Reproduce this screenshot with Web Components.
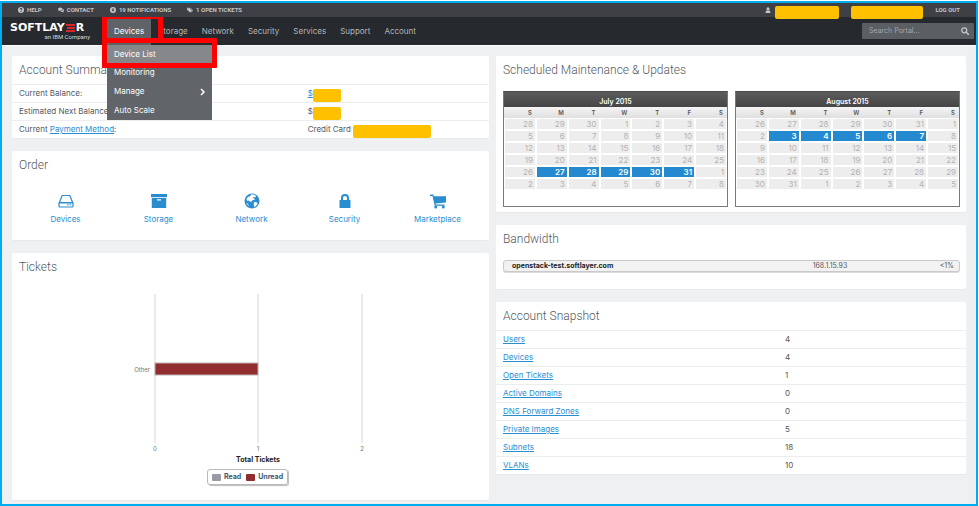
<!DOCTYPE html>
<html lang="en">
<head>
<meta charset="utf-8">
<title>SoftLayer Portal</title>
<style>
    body{
        margin: 0;
        background: #fff;
        color: #55585c;
        font: 8px/17px Inter, "Liberation Sans", sans-serif;
        --link: #2a8dd0;
        --line: #eceded;
        --pill: #ffc000;
        --mark: #fe0000;
        --title-font: 300 12px/28px Roboto, "Liberation Sans", sans-serif;
    }
</style>
</head>
<body>
<portal-app></portal-app>

<script>
class BaseElement extends HTMLElement{
    constructor(){
        super();
        this.attachShadow({mode: "open"});
    }
    connectedCallback(){
        const template = document.createElement("template");
        template.innerHTML = this.getStyle() + this.getTemplate();
        this.shadowRoot.replaceChildren(template.content.cloneNode(true));
    }
}

const icons = {
    help: `<path fill-rule="evenodd" d="M8 0a8 8 0 1 0 0 16A8 8 0 0 0 8 0zM5 6c0-2 1.300-3.300 3.200-3.300S11.300 4 11.300 5.700c0 2-2 2.200-2 3.600H6.900c0-2.400 1.900-2.500 1.900-3.500 0-1.200-1.500-1-1.500.4zM6.900 10.800h2.400V13H6.900z"/>`,
    chat: `<path d="M6 1c3.400 0 6 2 6 4.500S9.400 10 6 10c-.7 0-1.300 0-2-.3L1 11l1-2.500C.7 7.700 0 6.700 0 5.500 0 3 2.600 1 6 1z"/><path d="M13 5c2 .7 3 2 3 3.700 0 1.300-.7 2.300-1.700 3l.9 3-3.400-1.500c-2.500.4-4.800-.4-5.800-1.800 4 .2 7-2.600 7-6.400z"/>`,
    notice: `<path fill-rule="evenodd" d="M8 0a8 8 0 1 0 0 16A8 8 0 0 0 8 0zM6.500 3h3v4.500H12L8 12.500 4 7.500h2.500z"/>`,
    tags: `<path fill-rule="evenodd" d="M0 2h6l7 7-5 5.500L0 7.500zM2 4v2h2V4z"/><path d="M8 2h1.500L16 9l-5 5.500-1-1L14 9z"/>`,
    user: `<circle cx="8" cy="4.500" r="4"/><path d="M1.500 16c0-5 2-7.500 4-7.500 1.500 1 3.500 1 5 0 2 0 4 2.500 4 7.500z"/>`,
    search: `<circle cx="6.500" cy="6.500" r="5" fill="none" stroke="currentColor" stroke-width="2.500"/><path d="M10 10l5 5" stroke="currentColor" stroke-width="3" stroke-linecap="round"/>`,
    devices: `<path d="M4.200 2.500h7.600L14.800 10H1.200z" fill="none" stroke="currentColor" stroke-width="1.200" stroke-linejoin="round"/><rect x="1" y="9.500" width="14" height="4.500" rx="1" fill="none" stroke="currentColor" stroke-width="1.200"/><path d="M9 11.300h1.500v1H9zM11.500 11.300H13v1h-1.500z"/>`,
    storage: `<path d="M0 1h16v3.200H0z"/><path fill-rule="evenodd" d="M.8 5h14.400v10H.8zM6 6.300v1.300h4V6.300z"/>`,
    network: `<circle cx="8" cy="8" r="7.500"/><path fill="#fff" d="M7.500 1.200l2.800.5 1.800 1.400-1 1.500-1.400-.6-1 1.200 1.800.3.300 1.300-2 .3-1.300 1.600-1.600-.2-1.300-1-1.300.6L2.500 6 4 3.800l1.700-.3zM10 9l2.500.3 1.300 1-1.700 2.700-1.800 1-.6-2.500zM2 10l2 .8 1 2.400z"/>`,
    security: `<path fill-rule="evenodd" d="M4 7V5a4 4 0 0 1 8 0v2h1.500v8h-11V7zM6 7h4V5a2 2 0 0 0-4 0z"/>`,
    cart: `<path d="M0 1.500h3.300l.6 1.700H16v6.300l-10.500 1 .3 1H14.500v1.300H4.700L2.500 2.900H0z"/><circle cx="5.700" cy="14" r="1.500"/><circle cx="13.300" cy="14" r="1.500"/>`
};

class PortalIcon extends BaseElement{
    getTemplate(){
        return `<svg viewBox="0 0 16 16" aria-hidden="true" fill="currentColor">${icons[this.getAttribute("name")]}</svg>`;
    }
    getStyle(){
        return `
        <style>
            :host{
                display: block;
                width: var(--icon-size, 6px);
                height: var(--icon-size, 6px);
            }
            svg{
                display: block;
                width: 100%;
                height: 100%;
            }
        </style>`;
    }
}
customElements.define("portal-icon", PortalIcon);

// covers a private value
class PrivateValue extends BaseElement{
    getTemplate(){ return ``; }
    getStyle(){
        return `
        <style>
            :host{
                display: block;
                flex: none;
                width: var(--width, 28px);
                height: 13px;
                border-radius: 2px;
                background: var(--pill);
            }
        </style>`;
    }
}
customElements.define("private-value", PrivateValue);

class TopBar extends BaseElement{
    getTemplate(){
        return `
        <a href="#"><portal-icon name="help"></portal-icon>HELP</a>
        <a href="#"><portal-icon name="chat"></portal-icon>CONTACT</a>
        <a href="#"><portal-icon name="notice"></portal-icon>19 NOTIFICATIONS</a>
        <a href="#"><portal-icon name="tags"></portal-icon>1 OPEN TICKETS</a>
        <div class="user">
            <portal-icon name="user"></portal-icon>
            <private-value style="--width: 64px"></private-value>
            <private-value style="--width: 72px"></private-value>
            <a href="#">LOG OUT</a>
        </div>`;
    }
    getStyle(){
        return `
        <style>
            :host{
                display: flex;
                gap: 16px;
                height: 14px;
                padding: 0 16px;
                position: relative;
                z-index: 1;
                background: #3e4046;
                color: #c3c5c8;
                font: 700 6px/14px Roboto, "Liberation Sans", sans-serif;
            }
            a{
                display: flex;
                align-items: center;
                gap: 3px;
                color: inherit;
                text-decoration: none;
            }
            .user{
                display: flex;
                align-items: flex-start;
                gap: 12px;
                margin-left: auto;
            }
            .user portal-icon{
                margin: 4px -8px 0 0;
            }
            private-value{
                margin-top: 3px;
            }
        </style>`;
    }
}
customElements.define("top-bar", TopBar);

class BrandLogo extends BaseElement{
    getTemplate(){
        return `
        <div class="name">SOFTLAY<svg width="9" height="8" viewBox="0 0 9 8" role="img" aria-label="E"><path fill="#d9252c" d="M0 0h9v2H0zM1 3h8v2H1zM0 6h9v2H0z"/></svg>R</div>
        <div class="sub">an IBM Company</div>`;
    }
    getStyle(){
        return `
        <style>
            :host{
                display: block;
                width: 80px;
                color: #fff;
            }
            .name{
                display: flex;
                align-items: center;
                gap: 1px;
                font: 700 11px/10px "DejaVu Sans", sans-serif;
            }
            .sub{
                text-align: right;
                font: 6px/7px Roboto, sans-serif;
                color: #d8d9da;
            }
        </style>`;
    }
}
customElements.define("brand-logo", BrandLogo);

class NavMenu extends BaseElement{
    getTemplate(){
        return `
        <a class="open" href="#">Devices</a>
        <div class="menu">
            <a class="current" href="#">Device List</a>
            <a href="#">Monitoring</a>
            <a href="#">Manage <svg width="6" height="8" viewBox="0 0 6 8"><path d="M1 1l3 3-3 3" fill="none" stroke="#fff" stroke-width="1.500"/></svg></a>
            <a href="#">Auto Scale</a>
        </div>
        <i class="mark tab"></i>
        <i class="mark item"></i>`;
    }
    getStyle(){
        return `
        <style>
            :host{
                display: block;
                position: relative;
            }
            a{
                color: #fff;
                text-decoration: none;
            }
            .open{
                display: block;
                padding: 0 7px;
                line-height: 28px;
                background: #5f6266;
            }
            .menu{
                position: absolute;
                top: 28px;
                left: 0;
                width: 105px;
                background: #616468;
            }
            .menu a{
                display: flex;
                align-items: center;
                justify-content: space-between;
                padding: 0 6px 0 7px;
                line-height: 19px;
            }
            .menu .current{
                background: #85878b;
                line-height: 18px;
            }
            .mark{
                position: absolute;
                box-sizing: border-box;
                border: 5px solid var(--mark);
                border-radius: 1px;
            }
            .tab{
                left: -5px;
                top: -3px;
                width: 61px;
                height: 29px;
            }
            .item{
                left: -5px;
                top: 21px;
                width: 115px;
                height: 30px;
            }
        </style>`;
    }
}
customElements.define("nav-menu", NavMenu);

class NavBar extends BaseElement{
    getTemplate(){
        const links = ["Storage", "Network", "Security", "Services", "Support", "Account"];
        return `
        <brand-logo></brand-logo>
        <nav>
            <nav-menu></nav-menu>
            ${links.map(l => `<a href="#">${l}</a>`).join("")}
        </nav>
        <form>
            <input type="search" placeholder="Search Portal..." aria-label="Search Portal">
            <button type="button" aria-label="Search"><portal-icon name="search"></portal-icon></button>
        </form>`;
    }
    getStyle(){
        return `
        <style>
            :host{
                display: flex;
                align-items: center;
                height: 28px;
                padding: 0 2px 0 8px;
                background: #26292d;
                border-bottom: 1px solid #fff;
                color: #b4b6b9;
            }
            nav{
                display: flex;
                flex: 1;
                margin-left: 17px;
                line-height: 28px;
            }
            nav > a{
                padding: 0 7px;
                color: inherit;
                text-decoration: none;
            }
            form{
                display: flex;
                align-items: center;
                width: 112px;
                height: 16px;
                background: #5b5e63;
                border-radius: 1px;
            }
            input{
                flex: 1;
                min-width: 0;
                padding: 0 0 0 7px;
                border: 0;
                background: none;
                color: #fff;
                font: 7px/16px Inter, sans-serif;
            }
            input::placeholder{
                color: #a3a5a9;
            }
            button{
                --icon-size: 8px;
                padding: 0 5px;
                border: 0;
                background: none;
                color: #c3c5c8;
            }
        </style>`;
    }
}
customElements.define("nav-bar", NavBar);

class PortalCard extends BaseElement{
    getTemplate(){
        return `<h2>${this.getAttribute("heading")}</h2><slot></slot>`;
    }
    getStyle(){
        return `
        <style>
            :host{
                display: block;
                background: #fff;
                border-bottom: 1px solid #e8e9eb;
                border-radius: 2px;
            }
            h2{
                margin: 0;
                padding: 0 7px;
                font: var(--title-font);
                color: #55585c;
            }
        </style>`;
    }
}
customElements.define("portal-card", PortalCard);

const dataStyle = `
    :host{
        display: block;
    }
    table{
        width: 100%;
        border-collapse: collapse;
        table-layout: fixed;
    }
    th, td{
        height: 17px;
        padding: 0 7px;
        border-top: 1px solid var(--line);
        text-align: left;
        font-weight: 400;
    }
    a{
        color: var(--link);
    }`;

class AccountSummary extends BaseElement{
    getTemplate(){
        return `
        <table>
            <tr><th>Current Balance:</th><td><div><a href="#">$</a><private-value></private-value></div></td></tr>
            <tr><th>Estimated Next Balance:</th><td><div>$<private-value></private-value></div></td></tr>
            <tr><th>Current <a href="#">Payment Method</a>:</th><td><div>Credit Card&nbsp;<private-value style="--width: 78px"></private-value></div></td></tr>
        </table>`;
    }
    getStyle(){
        return `
        <style>
            ${dataStyle}
            th{
                width: 58%;
            }
            td{
                padding-left: 5px;
            }
            td div{
                display: flex;
                align-items: flex-end;
                height: 17px;
            }
        </style>`;
    }
}
customElements.define("account-summary", AccountSummary);

class AccountSnapshot extends BaseElement{
    getTemplate(){
        const rows = [
            ["Users", 4], ["Devices", 4], ["Open Tickets", 1], ["Active Domains", 0],
            ["DNS Forward Zones", 0], ["Private Images", 5], ["Subnets", 18], ["VLANs", 10]
        ];
        return `<table>${rows.map(([name, count]) => `<tr><th><a href="#">${name}</a></th><td>${count}</td></tr>`).join("")}</table>`;
    }
    getStyle(){
        return `
        <style>
            ${dataStyle}
            th{
                width: 57%;
            }
        </style>`;
    }
}
customElements.define("account-snapshot", AccountSnapshot);

class OrderLinks extends BaseElement{
    getTemplate(){
        const items = [
            ["devices", "Devices"], ["storage", "Storage"], ["network", "Network"],
            ["security", "Security"], ["cart", "Marketplace"]
        ];
        return items.map(([icon, label]) => `<a href="#"><portal-icon name="${icon}"></portal-icon>${label}</a>`).join("");
    }
    getStyle(){
        return `
        <style>
            :host{
                display: grid;
                grid-template-columns: repeat(5, 1fr);
                padding: 14px 5px 12px 7px;
                --icon-size: 16px;
            }
            a{
                display: flex;
                flex-direction: column;
                align-items: center;
                gap: 2px;
                color: var(--link);
                text-decoration: none;
            }
        </style>`;
    }
}
customElements.define("order-links", OrderLinks);

class MonthCalendar extends BaseElement{
    getTemplate(){
        const start = Number(this.getAttribute("start"));
        const before = Number(this.getAttribute("before"));
        const length = 31;
        const from = Number(this.getAttribute("from"));
        const to = Number(this.getAttribute("to"));
        let rows = "";
        for(let w = 0; w < 6; w++){
            rows += "<tr>";
            for(let d = 0; d < 7; d++){
                // day 1 is the first of the shown month
                const day = start - before + w * 7 + d;
                const shown = day < 1 ? day + before : day > length ? day - length : day;
                rows += `<td${day >= from && day <= to ? ' class="event"' : ""}>${shown}</td>`;
            }
            rows += "</tr>";
        }
        return `
        <table>
            <caption>${this.getAttribute("month")}</caption>
            <thead><tr>${[..."SMTWTFS"].map(d => `<th>${d}</th>`).join("")}</tr></thead>
            <tbody>${rows}</tbody>
        </table>`;
    }
    getStyle(){
        return `
        <style>
            :host{
                display: block;
                flex: 1;
                padding-bottom: 16px;
                border: 1px solid #77797b;
                border-top-color: #4a4a4a;
            }
            table{
                width: 100%;
                border-spacing: 0;
                table-layout: fixed;
            }
            caption{
                padding-top: 5px;
                font: 600 7px/10px Inter, sans-serif;
                color: #fff;
                background: linear-gradient(#5c5c5c, #454545);
            }
            thead{
                background: linear-gradient(#f5f5f5, #dfdfdf);
            }
            th, td{
                padding: 0 2px 0 0;
                text-align: right;
            }
            th{
                padding-right: 4px;
                font: 600 6px/11px Inter, sans-serif;
            }
            td{
                border: 1px solid transparent;
                background: #ededed padding-box;
                font-size: 8px;
                line-height: 10px;
                color: #b3b3b3;
            }
            .event{
                background-color: #2489cf;
                color: #fff;
                font-weight: 600;
            }
        </style>`;
    }
}
customElements.define("month-calendar", MonthCalendar);

class MaintenanceCalendars extends BaseElement{
    getTemplate(){
        return `
        <month-calendar month="July 2015" start="28" before="30" from="27" to="31"></month-calendar>
        <month-calendar month="August 2015" start="26" before="31" from="3" to="7"></month-calendar>`;
    }
    getStyle(){
        return `
        <style>
            :host{
                display: flex;
                gap: 7px;
                padding: 7px 6px 5px 7px;
            }
        </style>`;
    }
}
customElements.define("maintenance-calendars", MaintenanceCalendars);

class BandwidthList extends BaseElement{
    getTemplate(){
        return `<div><b>openstack-test.softlayer.com</b><span>168.1.15.93</span><span>&lt;1%</span></div>`;
    }
    getStyle(){
        return `
        <style>
            :host{
                display: block;
                padding: 7px 6px 17px 7px;
            }
            div{
                display: grid;
                grid-template-columns: 300fr 100fr 41fr;
                padding: 0 5px 0 8px;
                border: 1px solid #c9c9c9;
                border-radius: 3px;
                background: #f2f2f2;
                box-shadow: 0 1px #dcdcdc;
                font-size: 7px;
                line-height: 10px;
            }
            b{
                color: #222;
            }
            span:last-child{
                text-align: right;
            }
        </style>`;
    }
}
customElements.define("bandwidth-list", BandwidthList);

class TicketsChart extends BaseElement{
    getTemplate(){
        return `
        <svg class="plot" viewBox="0 0 477 186" role="img" aria-label="Tickets by group">
            <path d="M143 13v149M246 13v149M350 13v149" stroke="#d6d6d6" stroke-width="1"/>
            <rect x="143" y="82" width="103" height="12" fill="#912d2e" stroke="#b9b3b3"/>
            <text x="138" y="91" text-anchor="end">Other</text>
            <text x="143" y="170">0</text>
            <text x="246" y="170">1</text>
            <text x="350" y="170">2</text>
            <text class="title" x="246" y="181">Total Tickets</text>
        </svg>
        <div class="legend">
            <span><i></i>Read</span>
            <span class="unread"><i></i>Unread</span>
        </div>`;
    }
    getStyle(){
        return `
        <style>
            :host{
                display: flex;
                flex-direction: column;
                align-items: center;
                padding-bottom: 15px;
            }
            .plot{
                display: block;
                width: 100%;
            }
            text{
                font-size: 6px;
                text-anchor: middle;
                fill: #777;
            }
            text[text-anchor]{
                text-anchor: end;
            }
            .title{
                font-size: 7px;
                font-weight: 700;
                fill: #222;
            }
            .legend{
                display: flex;
                gap: 5px;
                margin: 2px 6px 0 0;
                padding: 0 4px;
                border: 1px solid #bbb;
                border-radius: 3px;
                box-shadow: 1px 1px 1px #bbb;
                font: 700 7px/14px Inter, sans-serif;
                color: #3e576f;
            }
            .legend span{
                display: flex;
                align-items: center;
                gap: 3px;
            }
            i{
                width: 9px;
                height: 7px;
                border-radius: 1px;
                background: #989ba3;
            }
            .unread i{
                background: #912d2e;
            }
        </style>`;
    }
}
customElements.define("tickets-chart", TicketsChart);

class PortalApp extends BaseElement{
    getTemplate(){
        return `
        <header>
            <top-bar></top-bar>
            <nav-bar></nav-bar>
        </header>
        <main>
            <section>
                <portal-card heading="Account Summary"><account-summary></account-summary></portal-card>
                <portal-card heading="Order"><order-links></order-links></portal-card>
                <portal-card heading="Tickets"><tickets-chart></tickets-chart></portal-card>
            </section>
            <section>
                <portal-card heading="Scheduled Maintenance &amp; Updates"><maintenance-calendars></maintenance-calendars></portal-card>
                <portal-card heading="Bandwidth"><bandwidth-list></bandwidth-list></portal-card>
                <portal-card heading="Account Snapshot"><account-snapshot></account-snapshot></portal-card>
            </section>
        </main>`;
    }
    getStyle(){
        return `
        <style>
            :host{
                display: block;
                box-sizing: border-box;
                margin: 1px 1px 1px 0;
                border: 2px solid #00aeef;
                background: #eff0f2;
            }
            header{
                position: relative;
                z-index: 1;
            }
            main{
                display: grid;
                grid-template-columns: 477fr 470fr;
                gap: 7px;
                align-items: start;
                padding: 10px 10px 3px;
            }
            section{
                display: grid;
                gap: 12px;
                min-width: 0;
            }
        </style>`;
    }
}
customElements.define("portal-app", PortalApp);
</script>
</body>
</html>
